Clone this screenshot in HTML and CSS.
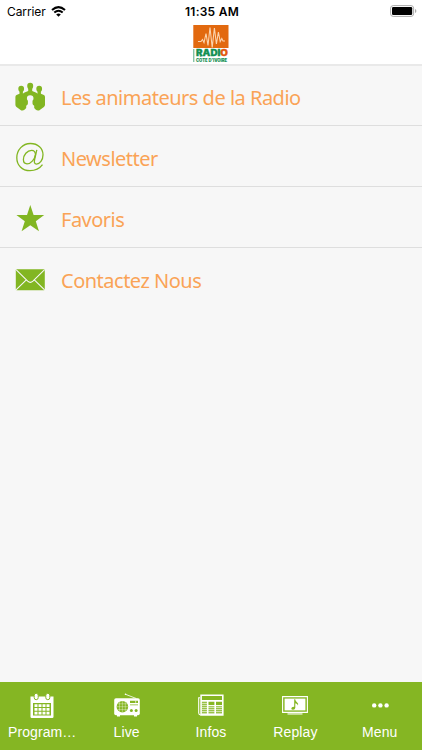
FILE: index.html
```
<!doctype html>
<html lang="fr">
<head>
    <meta charset="utf-8">
    <meta name="viewport" content="width=device-width, initial-scale=1">
    <title>Radio Côte d'Ivoire</title>
    <link rel="stylesheet" href="styles.css">
</head>
<body>

<header>
    <div class="status">
        <div class="carrier">
            <span>Carrier</span>
            <svg width="15" height="11" viewBox="0 0 15 11">
                <path d="M1 4.1Q7.5-1.8 14 4.1M3.3 6.6Q7.5 2.8 11.7 6.6" fill="none" stroke="#000" stroke-width="2"/>
                <path d="M5.2 8.5Q7.5 6.4 9.8 8.5L7.5 10.8z"/>
            </svg>
        </div>
        <div class="time">11:35 AM</div>
        <svg class="battery" width="27" height="12" viewBox="0 0 27 12">
            <rect x=".6" y=".6" width="23" height="10.8" rx="2.6" fill="#fff" stroke="#aaa"/>
            <rect x="2" y="2" width="20.2" height="8" rx="1.2"/>
            <path d="M25 4v4q1.4-.6 1.4-2T25 4z" fill="#aaa"/>
        </svg>
    </div>
    <svg class="logo" width="36" height="40" viewBox="0 0 36 40">
        <rect x=".3" y="0" width="35.2" height="23" fill="#e2690f"/>
        <path d="M5 16.5h3l1.5-2 1.5 3 2-9 2 12 2-18 2.2 20L21.4 3l2 16 2-12 1.8 9.5 1.6-3 1.2 2.5h2" fill="none" stroke="#fbd3ad" stroke-width="1.1"/>
        <path d="M.8 24v13" stroke="#279661" stroke-width=".8"/>
        <text class="logo-name" x="3" y="31.2" textLength="32" lengthAdjust="spacingAndGlyphs">RADI<tspan class="logo-o">O</tspan></text>
        <text class="logo-country" x="3" y="36.9" textLength="31" lengthAdjust="spacingAndGlyphs">CÔTE D'IVOIRE</text>
    </svg>
</header>

<ul class="menu">
    <li>
        <svg class="icon" width="30" height="30" viewBox="0 0 30 30">
            <path d="M12.2 4a3 3.2 0 0 1 6 0q0 1.8-1 2.9v2.2l3.6 1.3q1 .4 1.7 1.3v-2q-1.2-1-1.2-2.8a2.9 3.1 0 0 1 5.8 0q0 1.8-1.2 2.8v2l3 1.3q1.1.6 1.1 2v7.8q0 1.5-1.1 2.3l-4.8 3.3q-1.7.7-3.5-.8l-1.4-1.6v-2.2q-1.7-.7-1.7-2.3v-2.8q1-1 1-2.5 0-3-3.3-3t-3.3 3q0 1.5 1 2.5v2.8q0 1.6-1.7 2.3V26l-1.4 1.6q-1.8 1.5-3.5.8l-4.8-3.3Q.4 24.3.4 22.8V15q0-1.4 1.1-2l3-1.3v-2Q3.3 8.7 3.3 6.9a2.9 3.1 0 0 1 5.8 0q0 1.8-1.2 2.8v2q.7-.9 1.7-1.3l3.6-1.3V6.9q-1-1.1-1-2.9z"/>
        </svg>
        <span>Les animateurs de la Radio</span>
    </li>
    <li>
        <svg class="icon" width="30" height="30" viewBox="0 0 30 30">
            <path class="outline" d="M27.5 22.7Q23 28.7 15 28.7C7 28.7 1.8 23.1 1.8 15.7 1.8 7.8 7.8 1.5 15.4 1.5c7.5 0 12.6 4.8 12.6 11.3 0 5.4-3.3 9.3-6.4 9.3-2.3 0-2.6-2-2-4.6l2.2-9.6"/>
            <path class="outline" d="M20.5 12.3q-.4-4-3.8-4c-4.6 0-8.3 4.8-8.3 9.3 0 2.7 1.4 4.2 3.6 4.2 4.2 0 7.8-4.8 8.5-9.5z"/>
        </svg>
        <span>Newsletter</span>
    </li>
    <li>
        <svg class="icon" width="30" height="30" viewBox="0 0 30 30">
            <path d="M15.3 1.9l3.3 10h10.6l-8.4 6.4 3.2 9.9-8.7-6-8.7 6 3.2-9.9-8.4-6.4H12z"/>
        </svg>
        <span>Favoris</span>
    </li>
    <li>
        <svg class="icon" width="30" height="30" viewBox="0 0 30 30">
            <rect x=".8" y="4.2" width="29" height="21" rx="1"/>
            <path class="fold" d="M1 4.7l11.7 11.4q2.6 2.4 5.2 0L29.6 4.7M1 24.8l10.3-10M29.6 24.8l-10.3-10"/>
        </svg>
        <span>Contactez Nous</span>
    </li>
</ul>

<nav>
    <a>
        <svg width="28" height="28" viewBox="0 0 28 28">
            <path fill-rule="evenodd" d="M2.5 5.5h23v20.3q0 1.2-1.2 1.2H3.7q-1.2 0-1.2-1.2zM5 12v12.5h18V12z"/>
            <g class="ring"><rect x="6.2" y="2.3" width="4" height="6.4" rx="2"/><rect x="17.8" y="2.3" width="4" height="6.4" rx="2"/></g>
            <path d="M6.5 13.2h3v2.7h-3zm4 0h3v2.7h-3zm4 0h3v2.7h-3zm4 0h3v2.7h-3zm-12 3.8h3v2.7h-3zm4 0h3v2.7h-3zm4 0h3v2.7h-3zm4 0h3v2.7h-3zm-12 3.8h3v2.7h-3zm4 0h3v2.7h-3zm4 0h3v2.7h-3zm4 0h3v2.7h-3z"/>
        </svg>
        <span>Program…</span>
    </a>
    <a>
        <svg width="28" height="28" viewBox="0 0 28 28">
            <path d="M12.5 3.3l10.8 4.2" stroke="#fff" stroke-width=".8"/>
            <circle cx="12.5" cy="3.2" r=".8"/>
            <rect x="1.2" y="7.3" width="25.6" height="17" rx="1.8"/>
            <path d="M4 24h3v1.6H4zm17 0h3v1.6h-3z"/>
            <circle class="green" cx="9.4" cy="15.7" r="5.8"/>
            <path class="mesh" d="M9.4 10v11.5M6.5 11v9.4M12.3 11v9.4M3.8 15.7h11.3M4.5 12.8h9.8M4.5 18.6h9.8"/>
            <path class="green" d="M17 9.7h8v2.2h-8zM17 13.6h8v.7h-8z"/>
            <path d="M22.7 9.7v2.2" stroke="#fff" stroke-width=".7"/>
            <circle class="green" cx="18.4" cy="19.5" r="1.5"/>
            <circle class="green" cx="23.1" cy="19.5" r="1.5"/>
        </svg>
        <span>Live</span>
    </a>
    <a>
        <svg width="28" height="28" viewBox="0 0 28 28">
            <path class="line thick" d="M4.1 4.3h21.7v19.6H4.1z"/>
            <path class="line" d="M3 6.8H1.7v15.3q0 1.8 2 1.8"/>
            <path class="line thick" d="M4 9.9h21.8M10.7 9.9v14M18.2 9.9v14"/>
            <path class="line" d="M11 14.6h14"/>
            <path class="line thin" d="M5 12.3h5M5 14.3h5M5 16.3h20M5 18.3h20M5 20.3h20M5 22.3h20"/>
        </svg>
        <span>Infos</span>
    </a>
    <a>
        <svg width="28" height="28" viewBox="0 0 28 28">
            <path class="line" d="M1.6 5.6h24.8v15.8H1.6z"/>
            <rect x="3.6" y="7.6" width="20.8" height="11.8"/>
            <path class="green" d="M13.2 8.2h1q.2 2 2 3.2 1.5 1 .8 3-.5-1.7-2.7-2.2v4.5q-.2 1.9-2.2 2-1.8 0-1.8-1.2 0-1.9 2.9-1.8z"/>
            <path d="M6.5 22.4h15v1.1H6.5z"/>
        </svg>
        <span>Replay</span>
    </a>
    <a>
        <svg width="28" height="28" viewBox="0 0 28 28">
            <circle cx="8.2" cy="14.4" r="2.2"/>
            <circle cx="14.4" cy="14.4" r="2.2"/>
            <circle cx="20.6" cy="14.4" r="2.2"/>
        </svg>
        <span>Menu</span>
    </a>
</nav>

</body>
</html>
```
FILE: styles.css
```
body {
    display: flex;
    flex-direction: column;
    height: 750px;
    margin: 0;
    background-color: #f7f7f7;
    font-family: "Noto Sans", sans-serif;
    overflow: hidden;
}

header {
    box-sizing: border-box;
    height: 66px;
    background-color: #fff;
    border-bottom: 2px solid #e9e9e9;
}

.status {
    display: grid;
    grid-template-columns: 1fr auto 1fr;
    align-items: center;
    height: 22px;
    padding: 0 5px 0 7px;
    font-family: Inter, sans-serif;
    font-size: 12px;
}

.carrier {
    display: flex;
    align-items: center;
    gap: 5px;
    letter-spacing: -0.1px;
}

.time {
    font-weight: 600;
    letter-spacing: 0.25px;
}

.battery {
    justify-self: end;
}

.logo {
    display: block;
    margin: 3px auto 0;
    overflow: visible;
}

.logo-name {
    font: 900 8.6px Inter, sans-serif;
    fill: #149052;
    stroke: #149052;
    stroke-width: 0.3px;
}

.logo-o {
    fill: #e2590f;
    stroke: #e2590f;
}

.logo-country {
    font: 900 4.8px Inter, sans-serif;
    fill: #149052;
}

.menu {
    flex: 1;
    margin: 0;
    padding: 0;
    list-style: none;
}

.menu li {
    display: flex;
    align-items: center;
    box-sizing: border-box;
    height: 61px;
    padding: 2px 0 0 15px;
    gap: 16px;
    border-bottom: 1px solid #dedede;
    color: #faa356;
    font-size: 20px;
    letter-spacing: -0.5px;
}

.menu li:first-child {
    height: 60px;
}

.menu li:last-child {
    border-bottom: 0;
}

.menu span {
    padding-top: 2px;
}

.icon {
    fill: #82b622;
}

.outline {
    fill: none;
    stroke: #82b622;
    stroke-width: 1.3;
}

.fold {
    fill: none;
    stroke: #f7f7f7;
    stroke-width: 1.1;
}

nav {
    display: grid;
    grid-template-columns: repeat(5, 1fr);
    height: 68px;
    background-color: #85b623;
    color: #fff;
    font-family: "Liberation Sans", sans-serif;
    font-size: 14px;
    letter-spacing: 0.1px;
}

nav a {
    display: flex;
    flex-direction: column;
    align-items: center;
    padding-top: 9px;
    gap: 5px;
}

nav svg {
    fill: #fff;
}

.ring {
    stroke: #85b623;
    stroke-width: 1;
}

.green {
    fill: #85b623;
}

.mesh {
    stroke: #fff;
    stroke-width: .35;
}

.line {
    fill: none;
    stroke: #fff;
    stroke-width: 1.1;
}

.thick {
    stroke-width: 1.6;
}

.thin {
    stroke-width: .8;
}
```
